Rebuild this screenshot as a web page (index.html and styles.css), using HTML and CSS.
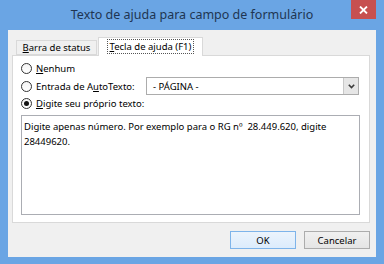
FILE: index.html
```html
<!DOCTYPE html>
<html lang="pt">
<head>
<meta charset="utf-8">
<link rel="stylesheet" href="styles.css">
</head>
<body>
<div class="window">
  <div class="titlebar">
    <div class="title">Texto de ajuda para campo de formulário</div>
    <div class="close">
      <svg width="9" height="8" viewBox="0 0 9 8"><path d="M1 0.5 L8 7.5 M8 0.5 L1 7.5" stroke="#fff" stroke-width="1.8"/></svg>
    </div>
  </div>
  <div class="client">
    <div class="tabs">
      <div class="tab tab-1"><span><u>B</u>arra de status</span></div>
      <div class="tab tab-active"><span class="focus"><u>T</u>ecla de ajuda (F1)</span></div>
    </div>
    <div class="panel">
      <div class="row">
        <span class="radio"></span>
        <span class="label"><u>N</u>enhum</span>
      </div>
      <div class="row row-auto">
        <span class="radio"></span>
        <span class="label label-auto">Entrada de A<u>u</u>toTexto:</span>
        <div class="combo">
          <span class="combo-text">- PÁGINA -</span>
          <span class="combo-btn">
            <svg width="7" height="5" viewBox="0 0 7 5"><path d="M0.8 0.8 L3.5 3.6 L6.2 0.8" fill="none" stroke="#3c3c3c" stroke-width="1.6"/></svg>
          </span>
        </div>
      </div>
      <div class="row">
        <span class="radio checked"></span>
        <span class="label"><u>D</u>igite seu próprio texto:</span>
      </div>
      <div class="textbox">Digite apenas número. Por exemplo para o RG nº  28.449.620, digite 28449620.</div>
    </div>
    <div class="buttons">
      <div class="btn btn-default">OK</div>
      <div class="btn">Cancelar</div>
    </div>
  </div>
</div>
</body>
</html>
```

FILE: styles.css
```css
* { box-sizing: border-box; }
html, body { margin: 0; padding: 0; }
body {
  width: 384px;
  height: 264px;
  overflow: hidden;
  background: #6aa5e4;
  font-family: "Noto Sans", "Open Sans", sans-serif;
  font-size: 9.5px;
  color: #000;
}
.window {
  display: flex;
  flex-direction: column;
  height: 264px;
  padding: 0 8px 7px 8px;
}
.titlebar {
  height: 30px;
  display: flex;
  align-items: flex-start;
}
.title {
  flex: 1;
  padding-left: 25px;
  text-align: center;
  font-size: 12.5px;
  line-height: 30px;
  color: #1f3552;
}
.close {
  width: 25px;
  height: 19px;
  background: #c75050;
  display: flex;
  align-items: center;
  justify-content: center;
}
.close svg { display: block; }
.client {
  flex: 1;
  background: #f0f0f0;
  display: flex;
  flex-direction: column;
  padding: 7px 6px 8px 4px;
}
.tabs {
  display: flex;
  align-items: flex-end;
  height: 19px;
  padding-left: 4px;
  margin-bottom: -1px;
  position: relative;
  z-index: 1;
}
.tab {
  display: flex;
  align-items: center;
  justify-content: center;
  border: 1px solid #d9d9d9;
  background: #f0f0f0;
  white-space: nowrap;
}
.tab-1 {
  width: 81px;
  height: 15px;
  border-bottom: 1px solid #d9d9d9;
  margin-bottom: 1px;
}
.tab-active {
  width: 105px;
  height: 19px;
  margin-left: 1px;
  background: #fff;
  border-bottom: none;
  padding-bottom: 2px;
}
.focus {
  border: 1px dotted #555;
  padding: 0 2px;
  line-height: 13px;
}
.panel {
  height: 168px;
  border: 1px solid #d9d9d9;
  background: #fff;
  padding: 4px 9px 7px 8px;
  display: flex;
  flex-direction: column;
}
.row {
  display: flex;
  align-items: center;
  height: 17px;
}
.row-auto { height: 18px; }
.radio {
  width: 11px;
  height: 11px;
  border-radius: 50%;
  border: 1px solid #333;
  background: linear-gradient(#f4f4f4, #fff);
  flex: 0 0 11px;
  display: flex;
  align-items: center;
  justify-content: center;
}
.radio.checked::after {
  content: "";
  width: 5px;
  height: 5px;
  border-radius: 50%;
  background: #111;
}
.label {
  margin-left: 4px;
  white-space: nowrap;
}
.label-auto {
  flex: 0 0 110px;
}
.combo {
  flex: 1;
  height: 18px;
  margin-right: 1px;
  border: 1px solid #acacac;
  background: #fff;
  display: flex;
  align-items: stretch;
}
.combo-text {
  flex: 1;
  padding-left: 6px;
  display: flex;
  align-items: center;
}
.combo-btn {
  width: 15px;
  background: #e6e6e6;
  border-left: 1px solid #c8c8c8;
  display: flex;
  align-items: center;
  justify-content: center;
}
.combo-btn svg { display: block; }
.textbox {
  margin-top: 3px;
  flex: 1;
  border: 1px solid #abadb3;
  background: #fff;
  padding: 3px 2px;
  line-height: 15px;
  white-space: pre-wrap;
}
.buttons {
  display: flex;
  justify-content: flex-end;
  gap: 8px;
  margin-top: 8px;
}
.btn {
  width: 66px;
  height: 18px;
  border: 1px solid #acacac;
  background: linear-gradient(#f0f0f0, #e5e5e5);
  display: flex;
  align-items: center;
  justify-content: center;
}
.btn-default {
  border-color: #7eb4ea;
  background: linear-gradient(#ecf4fc, #dcecfc);
}
u { text-decoration: underline; text-underline-offset: 1px; }
```
